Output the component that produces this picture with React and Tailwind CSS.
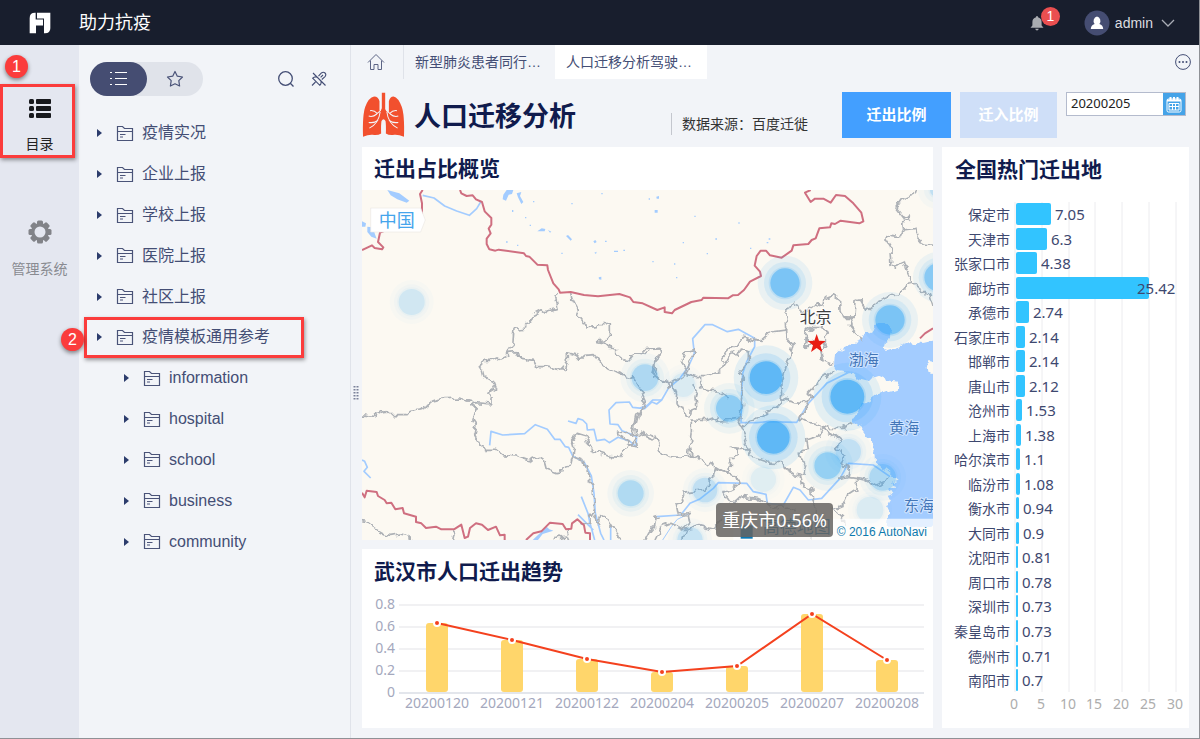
import React from "react";
import { useState } from "react";

const treeNodes = [
  { name: "疫情实况", child: false },
  { name: "企业上报", child: false },
  { name: "学校上报", child: false },
  { name: "医院上报", child: false },
  { name: "社区上报", child: false },
  { name: "疫情模板通用参考", child: false, marked: true },
  { name: "information", child: true },
  { name: "hospital", child: true },
  { name: "school", child: true },
  { name: "business", child: true },
  { name: "community", child: true },
];

const trend = [
  { date: "20200120", value: 0.63 },
  { date: "20200121", value: 0.48 },
  { date: "20200122", value: 0.31 },
  { date: "20200204", value: 0.19 },
  { date: "20200205", value: 0.24 },
  { date: "20200207", value: 0.71 },
  { date: "20200208", value: 0.3 },
];

const cities = [
  { name: "保定市", value: 7.05 },
  { name: "天津市", value: 6.3 },
  { name: "张家口市", value: 4.38 },
  { name: "廊坊市", value: 25.42 },
  { name: "承德市", value: 2.74 },
  { name: "石家庄市", value: 2.14 },
  { name: "邯郸市", value: 2.14 },
  { name: "唐山市", value: 2.12 },
  { name: "沧州市", value: 1.53 },
  { name: "上海市", value: 1.38 },
  { name: "哈尔滨市", value: 1.1 },
  { name: "临汾市", value: 1.08 },
  { name: "衡水市", value: 0.94 },
  { name: "大同市", value: 0.9 },
  { name: "沈阳市", value: 0.81 },
  { name: "周口市", value: 0.78 },
  { name: "深圳市", value: 0.73 },
  { name: "秦皇岛市", value: 0.73 },
  { name: "德州市", value: 0.71 },
  { name: "南阳市", value: 0.7 },
];

// x, y, core radius, halo radius, core opacity
const hotspots = [
  [155, 366, 39, 66, 0.2],
  [1275, 309, 44, 82, 0.75],
  [1590, 420, 44, 84, 0.75],
  [1735, 292, 42, 76, 0.65],
  [1730, 30, 20, 56, 0.3],
  [855, 593, 40, 74, 0.4],
  [970, 615, 36, 62, 0.15],
  [1108, 685, 40, 76, 0.6],
  [1218, 593, 49, 97, 1],
  [1462, 650, 51, 102, 1],
  [1240, 772, 49, 96, 1],
  [1403, 857, 40, 76, 0.55],
  [1465, 815, 38, 70, 0.28],
  [1568, 892, 40, 70, 0.4],
  [1210, 898, 38, 64, 0.13],
  [1530, 990, 40, 66, 0.15],
  [1035, 930, 37, 66, 0.3],
  [990, 1080, 38, 66, 0.25],
  [812, 940, 39, 70, 0.38],
];

const Logo = () => (
  <svg viewBox="86 36 66 65" className="w-[22px] h-[22px]" fill="#fff">
    <path d="M88 99V54Q88 38 104 38H106V58H128V76H107V99Z" />
    <path d="M110 38H150V84Q150 99 134 99H131V55H110Z" />
  </svg>
);

const FolderIcon = () => (
  <svg
    viewBox="0 0 18 17"
    className="w-[18px] h-[17px] shrink-0"
    fill="none"
    stroke="#4a5378"
    strokeWidth="1.2"
  >
    <path d="M1.5 15.5V1.5H6.5L8.5 3.5H16.5V15.5Z" />
    <path d="M1.5 6.5H16.5M4 9.5H9.5M4 12H7" />
  </svg>
);

const LungsIcon = () => (
  <svg viewBox="36 157 128 136" className="w-[43px] h-[46px]">
    <g fill="#f2502e">
      <path d="M95 159H105V207Q108 216 116 216V184Q119 170 130 170Q144 173 154 200Q163 224 161 290Q145 283 132 284Q116 286 107 280Q108 255 106 243Q100 232 94 243Q92 255 93 280Q84 286 68 284Q55 283 39 290Q37 224 46 200Q56 173 72 170Q85 170 88 184V212Q94 212 95 205Z" />
    </g>
    <g fill="none" stroke="#f4f5f9" strokeWidth="3">
      <path d="M91 168V212L80 222Q68 232 56 228M82 221Q72 210 60 212M90 216Q86 250 58 264M84 240Q72 250 56 247" />
      <path d="M109 168V212L120 222Q132 232 144 228M118 221Q128 210 140 212M110 216Q114 250 142 264M116 240Q128 250 144 247" />
    </g>
  </svg>
);

const Badge = ({ children, className }) => (
  <span
    className={`absolute flex h-[23px] w-[23px] items-center justify-center rounded-full bg-[#fb3c3c] text-base leading-none text-white shadow-[0_2px_4px_rgba(0,0,0,0.45)] ${className}`}
  >
    {children}
  </span>
);

const MigrationMap = () => (
  <div className="relative overflow-hidden">
    <svg
      viewBox="6 30 1713 1050"
      preserveAspectRatio="xMidYMid slice"
      className="block w-full h-[350px] bg-[#fcf9f2]"
      fill="none"
      strokeLinejoin="round"
    >
      {/* roughens the coast and the borders */}
      <filter id="rough" x="0" y="0" width="100%" height="100%">
        <feTurbulence type="fractalNoise" baseFrequency="0.04" numOctaves="2" />
        <feDisplacementMap
          in="SourceGraphic"
          scale="26"
          xChannelSelector="R"
          yChannelSelector="G"
        />
      </filter>
      {/* seas */}
      <path
        fill="#a3ccff"
        filter="url(#rough)"
        d="M1422 556L1425 522L1442 508L1482 490L1486 485L1500 480L1512 468L1538 455L1545 435L1570 430L1592 440L1598 457L1575 485L1570 505L1585 510L1618 500L1652 487L1690 492L1740 480V550L1708 543L1700 560L1702 575L1740 585V1040H1580L1585 1000L1578 985L1588 965L1580 950L1600 945L1590 930L1605 920L1596 905L1610 900L1590 880L1548 845L1547 820L1540 800L1530 780L1520 765L1505 745L1480 728L1478 715L1498 690L1505 675L1525 668L1530 655L1550 640L1580 634L1610 625L1614 602L1580 598L1556 585L1540 590L1525 605L1495 598L1470 575L1430 570Z"
      />
      {/* lakes */}
      <g fill="#a3ccff">
        <path d="M82 30L118 40L148 62L140 68L112 58L92 46Z" />
        <path d="M6 124L18 130L16 140H6Z" />
        <path d="M22 140L38 142L46 166L50 176L34 170L22 156Z" />
        <path d="M440 30H460L456 42L446 44L438 62L428 58L430 44Z" />
        <path d="M470 40L484 36L480 48L490 66L484 72L474 52Z" />
        <path d="M532 154L545 145L556 147L554 154Z" />
        <path d="M618 168L624 165L636 178L632 182Z" />
        <path d="M700 184L706 180L710 186L704 190ZM762 212H774V216H762ZM716 292L724 290V299L717 298ZM884 90H893V98H884ZM889 50L897 48V56H890ZM564 150L574 155L570 158ZM703 218L710 215L708 222Z" />
        <path d="M456 90H460V96H456ZM509 134H513V138H509ZM495 111H499V115H495ZM438 184H443V188H438ZM471 194H475V198H471ZM519 63H523V67H519ZM634 69H638V73H634ZM724 39H728V43H724ZM866 55H870V59H866ZM604 218H608V222H604ZM735 182H740V186H735ZM790 209H795V213H790ZM877 243H881V247H877Z" />
        <path d="M1003 107H1007V111H1003ZM1135 127H1139V131H1135ZM968 186H972V190H968ZM1066 175H1071V179H1066ZM1040 219H1044V223H1040ZM1170 203H1174V207H1170ZM1220 186H1225V190H1220ZM1226 175H1231V179H1226ZM942 250H946V254H942ZM948 291H952V295H948Z" />
        <path d="M518 1080L560 1040L568 1048L580 1052L548 1062L534 1080Z" />
      </g>
      {/* rivers */}
      <g stroke="#a3ccff" strokeWidth="5">
        <path d="M188 46L222 54L254 78L290 93L328 106L350 86L362 66" />
        <path d="M389 796L393 754L428 765L494 761L526 734L562 748L584 778L600 778L616 800L626 802L638 828L672 846L694 888L702 940L706 1000L722 1060L732 1080" />
        <path d="M624 723L648 730L654 716L668 720L680 732L682 750L702 748L710 782L734 778L748 788L774 772L810 784L828 800L830 770L806 760L786 752L774 734L750 732L747 690L768 668L808 666L818 682L854 686L876 666L890 672L905 660L925 625L960 595L985 560L1003 520L998 476L1035 434H1058L1102 455L1135 448L1184 475V500L1160 545L1148 580L1145 640L1143 728L1190 728L1222 725L1310 727L1345 670L1400 610L1470 575" />
        <path d="M6 840L14 844L22 862L12 874L32 894M664 950L684 1000L690 1030L704 1080M654 1004L680 1030L700 1050M752 1040V1080" />
        <path d="M840 684L862 676L878 660L905 660M890 1010L962 1005L990 970L1018 958L1060 925L1075 908L1160 910L1180 935L1218 943L1222 970L1270 975L1300 922L1320 930L1345 960L1385 955L1440 895L1465 850L1540 855L1590 890" />
        <path d="M908 1080L934 1040L952 1018L990 1000" strokeWidth="3" />
      </g>
      {/* province borders */}
      <g stroke="#adb1b6" strokeWidth="5" filter="url(#rough)">
        <path d="M598 340L584 352L590 376L586 386L562 392L556 400L546 392L520 406L500 432V444L462 448L458 496L444 516L442 524L398 544L372 544L358 554L366 566L372 590L396 604L404 624L378 640L396 656V672L346 668L332 674L346 680L338 712L352 732L344 768L360 796L376 808H410L430 824L466 828L508 842L536 832L556 846L562 868L588 878L612 874L614 864L632 858L638 832L668 844L690 882L688 900L698 914L704 990L698 1004L688 1000L686 1030L668 1036" />
        <path d="M442 520L472 518L476 532L498 534L502 542L522 544L530 560L556 560L596 568L604 560L616 566L622 546L622 518L652 526L662 538L674 526L700 524L716 544L744 564L776 580L800 590L820 594L838 622L856 662L848 688L828 702L816 760L842 764L852 754L864 776L898 786" />
        <path d="M632 340L636 354L656 390L648 408L664 428H674L678 444L706 440L710 434H748V464L736 480L716 482L736 486L752 500L758 508L770 510V526L786 538L808 542L818 530L812 524L832 516L856 520L874 508L898 506L900 508" />
        <path d="M898 520L885 550L876 578L892 600L900 598" />
        <path d="M0 704L42 710L50 696L62 698L66 690L82 704H138L148 694L182 690L198 684L210 664L254 656L300 654L330 662L346 670" />
        <path d="M776 574L800 592M848 688L832 708L824 740L832 800L806 796L798 780L770 764V756L790 758L816 766M834 776L806 804L786 814L780 832L750 830L728 822L698 814L682 786L678 768L652 760L638 780L644 800L638 832" />
        <path d="M0 1022L16 1024L40 1044L72 1062L98 1066L120 1062L146 1068L150 1090M286 1044L276 1090M580 1080L602 1070L620 1068L630 1090M630 1048L620 1064M704 1004L716 1030L722 1010L742 1020L756 1044L768 1050L784 1090M850 1090L866 1060L884 1038L888 1012L905 1008" />
        <path d="M840 510L895 505L903 528L884 548L886 570L878 590L898 598L920 608L925 625L938 608L965 590L980 570L964 548L975 515L1000 508L1005 520L990 545L978 580L1010 590L1040 590L1080 575L1100 545L1088 530L1105 512L1130 498L1150 472L1200 484L1225 462L1245 455L1280 450L1278 400L1300 370L1315 376L1320 400L1345 390L1372 372L1388 378L1392 355L1420 344L1438 355L1440 390L1448 410L1485 412L1488 365L1502 360L1518 390L1540 372L1570 358L1592 344L1610 342L1630 332L1655 302L1640 270L1632 245L1596 262L1592 200L1578 178L1580 164L1620 170L1630 150L1665 145L1668 168L1690 192L1730 196" />
        <path d="M1630 148L1628 126L1652 120L1650 108L1635 118L1608 85L1625 60L1665 42L1672 20M1655 302L1680 325L1706 345L1725 400M1448 412L1485 412L1468 435L1480 450L1502 470L1505 482M1372 400L1390 442L1402 465L1388 480L1400 500L1385 512L1392 540L1420 550M1335 500L1342 455L1360 440H1390L1402 462M1335 470V505L1362 480" />
        <path d="M1280 450V470L1300 492L1290 530L1275 560L1265 605L1268 640L1265 670L1230 695L1175 720L1145 738L1135 728L1148 680L1142 640L1150 600L1138 580L1165 545L1165 520L1145 510L1110 530L1100 548M1265 655L1300 665L1345 668L1355 650L1342 640L1368 612L1410 580L1425 570M1345 668L1320 715L1345 728L1370 730L1385 742L1402 730L1412 745H1450L1478 728" />
        <path d="M1020 590L1028 630L1082 638L1108 652M898 598L935 608L950 640L948 670L970 682L975 702L990 708L995 690L1008 685L1005 655L1012 630L995 610M1142 718L1070 724L1068 712L1045 718L1038 722L994 720V758L990 800L998 830L985 830L988 800M840 756L858 765L878 765L892 790L905 820L925 832L960 835L972 830L998 825L1020 840L1068 858L1072 870L1110 876L1112 835L1128 835L1135 812L1110 805L1145 808L1165 806L1170 830L1215 846L1265 848L1270 865L1298 880L1320 885L1330 920L1355 930L1358 955" />
        <path d="M1145 738L1160 770L1150 790L1165 806M1385 745L1375 768L1340 780L1345 808L1318 815L1322 838L1340 850L1335 880L1322 885M1385 742L1418 762L1445 785L1430 800L1455 832L1440 850L1465 862L1462 892L1440 898M1462 892L1520 900L1548 915L1590 900M1490 900L1488 930L1465 945L1455 970L1420 985L1450 1010L1452 1040M1068 858L1060 890L1045 900L1040 930L965 940L972 960L948 970L955 1005L985 1000L990 1030L968 1050L930 1030L905 1040L885 1080M1068 858L1100 876L1130 885L1138 910L1120 925L1090 940L1110 965L1130 968L1150 950L1190 955L1220 970L1240 985L1280 978L1310 990" />
        <path d="M960 1090L975 1050L1020 1040L1060 1050L1080 1020M1355 955L1370 990L1362 1030L1350 1090" />
      </g>
      {/* national border */}
      <g stroke="#cf6f80" strokeWidth="6">
        <path d="M188 30L180 42L186 70V110L60 158L54 186L70 202L66 208L44 204L36 196L6 210" />
        <path d="M300 30L304 40L320 48L338 46L348 58L366 66L374 94L394 114V134L386 146L392 160L380 176V192L388 208L406 212L416 209L492 220L498 228L508 230L532 254L562 256L564 270L580 310L596 328L600 338L632 336L672 345L714 349L778 342L810 352L820 366L848 370L892 390L914 382V396L936 400L944 390L994 366L1025 360L1030 353L1104 355L1118 346L1134 345L1152 330L1170 305L1203 288L1200 275L1184 257L1190 228L1202 212H1218L1230 226L1265 233L1295 212L1300 196L1345 192L1355 180L1367 175L1378 145L1410 142L1414 130L1425 132L1442 122L1498 130L1510 124L1504 98L1480 70L1455 48L1428 45L1412 68L1390 56H1365L1352 66L1335 38L1352 30" />
        <path d="M6 938L14 952L20 932L50 936L54 948L74 960L80 970L94 968L106 988L128 984L132 1000L168 1010V1026L184 1030L198 1044L228 1040L244 1048H282L304 1034L314 1074L324 1070L330 1044L348 1030L366 1034L384 1050L408 1040L420 1066L434 1064V1080M498 1080L520 1060L544 1054L570 1028L608 1032L618 1048L634 1046L636 1030L652 1018L672 1036L676 1058L690 1060V1080" />
        <path d="M1680 475L1695 460L1719 445" />
      </g>
      {hotspots.map(([x, y, core, halo, opacity]) => (
        <g key={`${x}-${y}`} fill="#38a9f7">
          <circle cx={x} cy={y} r={halo} opacity={opacity * 0.12} />
          <circle
            cx={x}
            cy={y}
            r={Math.round((core + halo) / 2)}
            opacity={opacity * 0.16}
          />
          <circle cx={x} cy={y} r={core + 5} opacity={opacity * 0.2} />
          <circle cx={x} cy={y} r={core} opacity={opacity * 0.66} />
        </g>
      ))}
      <path
        fill="#e81c12"
        d="M1370 462L1377 482L1397 483L1381 496L1387 516L1370 504L1353 516L1359 496L1343 483L1363 482Z"
      />
      <path
        d="M32 84H182L196 120L182 156H32Z"
        fill="#fff"
        stroke="#ebe9e4"
        strokeWidth="2"
      />
      <g className="font-[Noto_Sans_CJK_SC]">
        <text x="56" y="142" fontSize="54" fill="#45a5ec">
          中国
        </text>
        <g stroke="#fff" strokeWidth="6" paintOrder="stroke">
          <text x="1319" y="430" fontSize="48" fill="#3f3f3f">
            北京
          </text>
          <g fill="#4376b8" fontSize="45" strokeOpacity="0.5">
            <text x="1466" y="555">渤海</text>
            <text x="1588" y="759">黄海</text>
            <text x="1632" y="994">东海</text>
          </g>
        </g>
        <path d="M1120 1016H1719V1080H1120Z" fill="#fff" opacity="0.7" />
        <path d="M1142 1036H1178V1076H1142Z" fill="#0a78b4" />
        <text x="1208" y="1060" fontSize="51" fill="#0a78b4">
          高德地图
        </text>
      </g>
    </svg>
    <div className="absolute bottom-[3px] right-[100px] rounded bg-[#666461]/85 px-1.5 py-1 font-['Noto_Sans','Noto_Sans_CJK_SC',sans-serif] text-lg leading-[26px] text-white">
      重庆市0.56%
    </div>
    <span className="absolute bottom-0 right-1.5 text-xs leading-4 text-[#0d7aae]">
      © 2016 AutoNavi
    </span>
  </div>
);

const TrendChart = () => {
  const points = trend.map((d, i) => ({
    ...d,
    x: 75 + i * 75,
    y: 98 - Math.round(d.value * 111),
  }));

  return (
    <svg
      viewBox="0 0 571 130"
      className="block w-full font-['Noto_Sans',sans-serif] text-sm"
    >
      {[0.8, 0.6, 0.4, 0.2, 0].map((tick, i) => (
        <g key={tick}>
          <path
            d={`M37 ${10 + i * 22}H562`}
            stroke={tick === 0 ? "#e3e6ec" : "#f1f1f3"}
            strokeWidth="2"
          />
          <text x="33" y={14 + i * 22} textAnchor="end" fill="#a4a8bd">
            {tick}
          </text>
        </g>
      ))}
      {points.map((p) => (
        <g key={p.date}>
          <rect
            x={p.x - 11}
            y={p.y}
            width="22"
            height={97 - p.y}
            rx="3"
            fill="#ffd66b"
          />
          <text x={p.x} y="113" textAnchor="middle" fill="#a4a8bd">
            {p.date}
          </text>
        </g>
      ))}
      <polyline
        points={points.map((p) => `${p.x},${p.y}`).join(" ")}
        fill="none"
        stroke="#f4411e"
        strokeWidth="2"
      />
      {points.map((p) => (
        <circle
          key={p.date}
          cx={p.x}
          cy={p.y}
          r="3"
          fill="#f4411e"
          stroke="#fff"
          strokeWidth="2"
        />
      ))}
    </svg>
  );
};

const CityChart = () => (
  <svg
    viewBox="0 0 247 530"
    className="block w-full font-['Noto_Sans','Noto_Sans_CJK_SC',sans-serif]"
  >
    {[0, 5, 10, 15, 20, 25, 30].map((tick) => (
      <g key={tick}>
        <path
          d={`M${Math.round(73 + tick * 5.36)} 5V495`}
          stroke="#ececef"
          strokeWidth="1"
        />
        <text
          x={Math.round(72 + tick * 5.36)}
          y="512"
          textAnchor="middle"
          className="text-sm"
          fill="#adadad"
        >
          {tick}
        </text>
      </g>
    ))}
    {cities.map((c, i) => {
      const y = Math.round(17 + i * 24.53);
      const width = Math.max(2, Math.round(c.value * 5.3 - 2));
      return (
        <g key={c.name} fill="#3e486f">
          <text x="68" y={y + 6} textAnchor="end" className="text-sm">
            {c.name}
          </text>
          <rect
            x="74"
            y={y - 11}
            width={width}
            height="22"
            rx={Math.min(2, width / 2)}
            fill="#32c4ff"
          />
          <text
            x={Math.min(78 + width, 195)}
            y={y + 6}
            className="text-[15px]"
          >
            {c.value}
          </text>
        </g>
      );
    })}
  </svg>
);

const App = () => {
  const [date, setDate] = useState("20200205");

  return (
    <div className="flex min-h-screen flex-col border-b border-r border-[#8f9196] bg-[#f2f4f8] font-['Liberation_Sans','Noto_Sans_CJK_SC',sans-serif] text-[#444e75]">
      <header className="flex h-[45px] items-center bg-[#181e2d] pl-[29px] pr-6 text-white">
        <Logo />
        <h1 className="ml-7 text-lg">助力抗疫</h1>
        <div className="ml-auto flex items-center">
          <button type="button" aria-label="通知" className="relative mr-10">
            <svg viewBox="0 0 14 16" className="h-4 w-3.5" fill="#a9acb1">
              <path d="M7 1Q8 1 8 2.2Q11.6 3.2 11.6 7V10.5L13.5 12.8H.5L2.4 10.5V7Q2.4 3.2 6 2.2Q6 1 7 1ZM5.2 13.8H8.8Q8.4 15.4 7 15.4Q5.6 15.4 5.2 13.8Z" />
            </svg>
            <span className="absolute -top-2 left-[11px] flex h-[19px] w-[19px] items-center justify-center rounded-full bg-[#ea4f50] text-sm">
              1
            </span>
          </button>
          <button type="button" className="flex items-center">
            <svg viewBox="0 0 26 26" className="h-[26px] w-[26px]">
              <circle cx="13" cy="13" r="12.5" fill="#454d72" />
              <path
                d="M13 6.5A4 4.5 0 0 1 15.4 14Q19 15 19.2 19H6.8Q7 15 10.6 14A4 4.5 0 0 1 13 6.5Z"
                fill="#fff"
              />
            </svg>
            <span className="ml-[5px] text-sm text-[#dcdde0]">admin</span>
            <svg
              viewBox="0 0 14 8"
              className="ml-2 h-2 w-3.5"
              fill="none"
              stroke="#a9acb5"
              strokeWidth="1.3"
            >
              <path d="M1 1L7 7L13 1" />
            </svg>
          </button>
        </div>
      </header>

      <div className="flex flex-1">
        <nav className="relative w-[79px] shrink-0 bg-[#e4e7f0] text-sm">
          <button
            type="button"
            className="mt-[39px] flex h-[74px] w-[75px] flex-col items-center justify-between border-3 border-[#fb3c3c] pb-px pl-1 pt-3 text-[#222] shadow-[1px_2px_4px_rgba(0,0,0,0.4)]"
          >
            <svg viewBox="0 0 22 19" className="h-[19px] w-[22px]" fill="#17191d">
              <rect width="5" height="5" rx="1.5" />
              <rect x="7" width="15" height="5" rx="1" />
              <rect y="7" width="5" height="5" rx="1.5" />
              <rect x="7" y="7" width="15" height="5" rx="1" />
              <rect y="14" width="5" height="5" rx="1.5" />
              <rect x="7" y="14" width="15" height="5" rx="1" />
            </svg>
            <span>目录</span>
          </button>
          <button
            type="button"
            className="mt-[62px] flex w-full flex-col items-center gap-[15px] text-[#898b91]"
          >
            <svg viewBox="-12 -12 24 24" className="h-6 w-6" fill="#818388">
              {[0, 45, 90, 135].map((deg) => (
                <rect
                  key={deg}
                  x="-3"
                  y="-11.5"
                  width="6"
                  height="23"
                  rx="1.5"
                  transform={`rotate(${deg})`}
                />
              ))}
              <circle r="9" />
              <circle r="5.5" fill="#e4e7f0" />
            </svg>
            <span>管理系统</span>
          </button>
          <Badge className="left-[5px] top-2.5">1</Badge>
          <Badge className="left-[61px] top-[283px] z-10">2</Badge>
        </nav>

        <aside className="w-[272px] shrink-0 border-r border-[#e0e3ea]">
          <div className="flex items-center pl-[11px] pr-[23px] pt-[17px]">
            <div className="flex rounded-full bg-[#e0e3ea]">
              <button
                type="button"
                aria-label="目录列表"
                className="flex h-[34px] w-[57px] items-center justify-center rounded-full bg-[#454d72]"
              >
                <svg
                  viewBox="0 0 17 14"
                  className="h-3.5 w-[17px]"
                  stroke="#fff"
                >
                  <path d="M0 .5H2M5 .5H17M0 6.5H2M5 6.5H17M0 12.5H2M5 12.5H17" />
                </svg>
              </button>
              <button
                type="button"
                aria-label="收藏"
                className="flex h-[34px] w-14 items-center justify-center"
              >
                <svg
                  viewBox="0 0 18 18"
                  className="h-[18px] w-[18px]"
                  fill="none"
                  stroke="#4a5378"
                  strokeWidth="1.2"
                  strokeLinejoin="round"
                >
                  <path d="M9 1.5L11.3 6.2L16.5 7L12.8 10.6L13.6 16L9 13.8L4.4 16L5.2 10.6L1.5 7L6.7 6.2Z" />
                </svg>
              </button>
            </div>
            <button type="button" aria-label="搜索" className="ml-auto">
              <svg
                viewBox="0 0 18 18"
                className="h-[18px] w-[18px]"
                fill="none"
                stroke="#444e75"
                strokeWidth="1.3"
              >
                <circle cx="8.5" cy="8.5" r="6.8" />
                <path d="M13.3 13.3L16.5 16.5" />
              </svg>
            </button>
            <button type="button" aria-label="固定" className="ml-4">
              <svg
                viewBox="0 0 16 16"
                className="h-4 w-4"
                fill="none"
                stroke="#444e75"
                strokeWidth="1.1"
              >
                <path d="M2 2L14.5 14.5M1 14.5L4.5 11M7.5 5.2L10.4 2Q12.4 .4 14 2T14 5.6L10.8 8.5M9.8 9.8Q10.8 12.4 8.8 14.3L1.7 7.2Q3.6 5.2 6.2 6.2M9.6 6.4L12 4" />
              </svg>
            </button>
          </div>

          <ul className="mt-[17px] grid h-[449px] auto-rows-fr">
            {treeNodes.map((node) => (
              <li
                key={node.name}
                className={node.marked ? "relative flex" : "flex"}
              >
                <button
                  type="button"
                  className={`flex flex-1 items-center ${node.child ? "pl-[45px]" : "pl-[18px]"}`}
                >
                  <svg viewBox="0 0 5 8" className="h-2 w-[5px]" fill="#2c3c6c">
                    <path d="M0 0L5 4L0 8Z" />
                  </svg>
                  <span className="ml-3.5 flex items-center gap-2 text-base">
                    <FolderIcon />
                    {node.name}
                  </span>
                </button>
                {node.marked && (
                  <span className="pointer-events-none absolute inset-y-0 left-[5px] right-[46px] border-3 border-[#fb3c3c] shadow-[1px_2px_4px_rgba(0,0,0,0.4)]" />
                )}
              </li>
            ))}
          </ul>
        </aside>

        <main className="relative min-w-0 flex-1">
          <svg
            viewBox="0 0 6 14"
            className="absolute left-0.5 top-[341px] h-3.5 w-1.5"
            stroke="#7b8199"
            strokeWidth="2"
            strokeDasharray="1.5 1.5"
          >
            <path d="M1.5 0V14M4.5 0V14" />
          </svg>
          <div className="flex h-[34px] items-stretch text-sm">
            <button
              type="button"
              aria-label="首页"
              className="flex w-[53px] items-center justify-center border-r border-[#dfe2e9] pr-0.5"
            >
              <svg
                viewBox="0 0 18 18"
                className="h-[18px] w-[18px]"
                fill="none"
                stroke="#5c6485"
              >
                <path d="M1 9.5L9 1.5L17 9.5M3.5 7.5V16.5H7V11.5H11V16.5H14.5V7.5" />
              </svg>
            </button>
            <button type="button" className="w-[151px] pl-[11px] text-left">
              新型肺炎患者同行…
            </button>
            <button
              type="button"
              className="w-[152px] bg-white pl-[11px] text-left"
            >
              人口迁移分析驾驶…
            </button>
            <button type="button" aria-label="更多" className="ml-auto mr-2">
              <svg viewBox="0 0 16 16" className="h-4 w-4" fill="#444e75">
                <circle cx="8" cy="8" r="7.4" fill="none" stroke="#444e75" />
                <circle cx="4.5" cy="8" r="1" />
                <circle cx="8" cy="8" r="1" />
                <circle cx="11.5" cy="8" r="1" />
              </svg>
            </button>
          </div>

          <div className="flex items-start pb-[9px] pl-[11px] pr-[13px] pt-[13px]">
            <LungsIcon />
            <h2 className="ml-[9px] mt-[5px] text-[27px] font-bold leading-10 text-[#101b4d]">
              人口迁移分析
            </h2>
            <p className="ml-auto mt-[21px] border-l border-[#c4c7ce] pl-2.5 text-sm leading-[22px] text-[#333]">
              数据来源：百度迁徙
            </p>
            <button
              type="button"
              className="ml-[34px] h-[46px] w-[109px] bg-[#439fff] text-[15px] font-bold text-white"
            >
              迁出比例
            </button>
            <button
              type="button"
              className="ml-[9px] h-[46px] w-[97px] bg-[#cfdff8] text-[15px] font-bold text-white"
            >
              迁入比例
            </button>
            <div className="ml-[9px] flex h-6 w-[120px] border border-[#b4bbcd] bg-white">
              <input
                type="text"
                aria-label="日期"
                value={date}
                onChange={(e) => setDate(e.target.value)}
                className="w-full min-w-0 pl-1 font-['Noto_Sans',sans-serif] text-[13px] text-[#222]"
              />
              <button
                type="button"
                aria-label="选择日期"
                className="flex w-[22px] shrink-0 items-center justify-center bg-[#45a3e8]"
              >
                <svg
                  viewBox="0 0 16 17"
                  className="h-[17px] w-4"
                  fill="none"
                  stroke="#fff"
                >
                  <rect x="1" y="3" width="14" height="13" rx="1.5" />
                  <path
                    d="M1 4.5H15M4.5 1V4M8 1V4M11.5 1V4"
                    strokeWidth="2"
                  />
                  <path d="M3 7.5H13V14H3ZM3 10.5H13M6.5 7.5V14M9.5 7.5V14" />
                </svg>
              </button>
            </div>
          </div>

          <div className="flex gap-[9px] pb-2.5 pl-[11px] pr-2.5">
            <div className="flex min-w-0 flex-1 flex-col gap-[9px]">
              <section className="bg-white">
                <h3 className="pl-3 pt-px text-[21px] font-bold leading-[42px] text-[#101b4d]">
                  迁出占比概览
                </h3>
                <MigrationMap />
              </section>
              <section className="bg-white pb-[3px]">
                <h3 className="pl-3 text-[21px] font-bold leading-[46px] text-[#101b4d]">
                  武汉市人口迁出趋势
                </h3>
                <TrendChart />
              </section>
            </div>
            <section className="w-[247px] shrink-0 bg-white">
              <h3 className="pl-[13px] text-[21px] font-bold leading-[46px] text-[#101b4d]">
                全国热门迁出地
              </h3>
              <div className="pt-1">
                <CityChart />
              </div>
            </section>
          </div>
        </main>
      </div>
    </div>
  );
};

export default App;
